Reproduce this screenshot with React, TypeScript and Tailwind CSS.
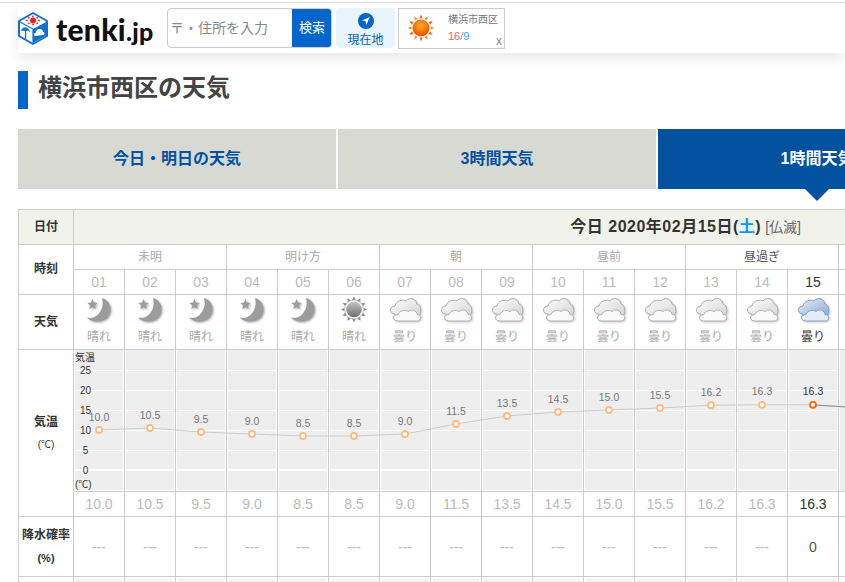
import { Fragment } from 'react'

type Kind = 'moon' | 'sun' | 'cloud'

interface Hour {
  hour: string
  kind: Kind
  label: string
  temp: string
  precip: string
  now?: boolean
}

const hours: Hour[] = [
  { hour: '01', kind: 'moon', label: '晴れ', temp: '10.0', precip: '---' },
  { hour: '02', kind: 'moon', label: '晴れ', temp: '10.5', precip: '---' },
  { hour: '03', kind: 'moon', label: '晴れ', temp: '9.5', precip: '---' },
  { hour: '04', kind: 'moon', label: '晴れ', temp: '9.0', precip: '---' },
  { hour: '05', kind: 'moon', label: '晴れ', temp: '8.5', precip: '---' },
  { hour: '06', kind: 'sun', label: '晴れ', temp: '8.5', precip: '---' },
  { hour: '07', kind: 'cloud', label: '曇り', temp: '9.0', precip: '---' },
  { hour: '08', kind: 'cloud', label: '曇り', temp: '11.5', precip: '---' },
  { hour: '09', kind: 'cloud', label: '曇り', temp: '13.5', precip: '---' },
  { hour: '10', kind: 'cloud', label: '曇り', temp: '14.5', precip: '---' },
  { hour: '11', kind: 'cloud', label: '曇り', temp: '15.0', precip: '---' },
  { hour: '12', kind: 'cloud', label: '曇り', temp: '15.5', precip: '---' },
  { hour: '13', kind: 'cloud', label: '曇り', temp: '16.2', precip: '---' },
  { hour: '14', kind: 'cloud', label: '曇り', temp: '16.3', precip: '---' },
  { hour: '15', kind: 'cloud', label: '曇り', temp: '16.3', precip: '0', now: true },
]

const periods = [
  { name: '未明', span: 3 },
  { name: '明け方', span: 3 },
  { name: '朝', span: 3 },
  { name: '昼前', span: 3 },
  { name: '昼過ぎ', span: 3, now: true },
]

const axis = [25, 20, 15, 10, 5, 0]

const ptX = (i: number) => 25 + 51 * i
const ptY = (t: string) => 120 - 4 * parseFloat(t)

function Logo() {
  return (
    <svg viewBox="0 0 30 33" className="h-[33px] w-[30px]">
      <path d="M15 1 L29 9 L29 24 L15 32 L1 24 L1 9 Z" fill="#fff" stroke="#1270c8" strokeWidth="2" strokeLinejoin="round" />
      <path d="M15 17 L28 10 L28 23.5 L15 31 Z" fill="#1270c8" />
      <path d="M2 10 L15 17 L15 31" fill="none" stroke="#1270c8" strokeWidth="1.2" />
      <circle cx="15" cy="8.5" r="3" fill="#e8242a" />
      {[0, 45, 90, 135, 180, 225, 270, 315].map((a) => (
        <circle
          key={a}
          cx={15 + 6 * Math.cos((a * Math.PI) / 180)}
          cy={8.5 + 4 * Math.sin((a * Math.PI) / 180)}
          r="0.9"
          fill="#e8242a"
        />
      ))}
      <path d="M3 19 C4 14 11 14 12 20 C10 18.5 9 18.5 7.6 19.5 C6 18.5 5 18.5 3 19 Z" fill="#0f7fb8" />
      <path d="M7.6 18 L7.6 26 C7.6 27.5 5.5 27.5 5.5 26" fill="none" stroke="#0f7fb8" strokeWidth="1.3" />
      <path d="M17.5 24 C15.5 24 15.5 21 17.5 21 C18 18 20.5 16 23 17.5 C25 18 25 20 25 20 C27 20 27 23 25 23 Z" fill="#fff" />
    </svg>
  )
}

function ColorSun() {
  const rays = Array.from({ length: 12 }, (_, i) => i * 30)
  return (
    <svg viewBox="0 0 30 30" className="h-[30px] w-[30px]">
      <defs>
        <radialGradient id="sunfill" cx="50%" cy="35%" r="65%">
          <stop offset="0%" stopColor="#ffb020" />
          <stop offset="100%" stopColor="#f04a00" />
        </radialGradient>
      </defs>
      {rays.map((a) => (
        <path key={a} d="M13.4 5.5 L15 1.5 L16.6 5.5 Z" fill={a % 60 === 0 ? '#ff5a1e' : '#ff8a1e'} transform={`rotate(${a} 15 15)`} />
      ))}
      <circle cx="15" cy="15" r="8.5" fill="url(#sunfill)" />
    </svg>
  )
}

function MoonIcon() {
  return (
    <svg viewBox="0 0 40 32" className="h-8 w-10 drop-shadow-[1px_1px_1px_rgba(0,0,0,0.35)]">
      <path d="M23 1 C30 3 33 10 31 16 C29 23 21 26 14 24 C11 23 9 22 8 20.5 C11 21.5 15 21 18 18.5 C23 14.5 25 7 23 1 Z" fill="#9c9c9c" />
      <path d="M13.5 2 L14.9 5.6 L18.6 5.9 L15.8 8.3 L16.7 12 L13.5 10 L10.3 12 L11.2 8.3 L8.4 5.9 L12.1 5.6 Z" fill="#9c9c9c" />
    </svg>
  )
}

function GraySunIcon() {
  const rays = Array.from({ length: 12 }, (_, i) => i * 30)
  return (
    <svg viewBox="0 0 40 32" className="h-8 w-10">
      <defs>
        <linearGradient id="graysun" x1="0" y1="0" x2="0" y2="1">
          <stop offset="0%" stopColor="#c4c4c4" />
          <stop offset="100%" stopColor="#6e6e6e" />
        </linearGradient>
      </defs>
      {rays.map((a) => (
        <path key={a} d="M18.2 3 L20 -0.5 L21.8 3 Z" fill="#8a8a8a" transform={`rotate(${a} 20 12.5)`} />
      ))}
      <circle cx="20" cy="12.5" r="9.4" fill="#fff" stroke="#a0a0a0" strokeWidth="0.6" />
      <circle cx="20" cy="12.5" r="7.8" fill="url(#graysun)" />
    </svg>
  )
}

function CloudIcon({ id, now }: { id: string; now?: boolean }) {
  const top = now ? '#e6eef8' : '#ffffff'
  const bottom = now ? '#8ba6cd' : '#d2d2d2'
  return (
    <svg viewBox="0 0 40 32" className="h-8 w-10 drop-shadow-[1px_1px_1px_rgba(0,0,0,0.2)]">
      <defs>
        <linearGradient id={id} x1="0" y1="0" x2="1" y2="1">
          <stop offset="0%" stopColor={top} />
          <stop offset="100%" stopColor={bottom} />
        </linearGradient>
      </defs>
      <path
        d="M10 17 C4 17 4 9 10 9 C11 4 17 2 21 4 C24 0 31 1 32 7 C37 8 37 18 33 20 L10 20 Z"
        fill={`url(#${id})`}
        stroke={now ? '#7f98bd' : '#a8a8a8'}
        strokeWidth="0.9"
      />
      <path
        d="M13 24 C7 24 7 17.5 13 17.5 C14 13.5 20 12.5 23 14.5 C26 11.5 32 13.5 32 17.5 C37 17.5 37 24 32 24 Z"
        fill={now ? '#e3ecf7' : '#fbfbfb'}
        stroke={now ? '#7f98bd' : '#a8a8a8'}
        strokeWidth="0.9"
      />
    </svg>
  )
}

function WeatherIcon({ h }: { h: Hour }) {
  if (h.kind === 'moon') return <MoonIcon />
  if (h.kind === 'sun') return <GraySunIcon />
  return <CloudIcon id={`cloud-${h.hour}`} now={h.now} />
}

function ChartCell({ children }: { children?: React.ReactNode }) {
  return (
    <td className="border border-[#ccc] p-0 align-top">
      <div className="relative flex h-[141px] flex-col gap-px px-px">
        <div className="h-5 bg-[#eee]" />
        <div className="h-[19px] bg-[#eee]" />
        <div className="h-[19px] bg-[#eee]" />
        <div className="h-[19px] bg-[#eee]" />
        <div className="h-[19px] bg-[#eee]" />
        <div className="h-[18px] bg-[#eee]" />
        <div className="mt-px h-[19px] bg-[#eee]" />
        {children}
      </div>
    </td>
  )
}

function TempChart() {
  const line = hours.map((h, i) => `${ptX(i)},${ptY(h.temp)}`).join(' ')
  const last = hours.length - 1
  return (
    <svg className="absolute top-0 left-0 z-10 h-[141px] w-[772px] overflow-visible" viewBox="0 0 772 141">
      <polyline points={line} fill="none" stroke="#ccc" strokeWidth="1" />
      <line x1={ptX(last)} y1={ptY('16.3')} x2="772" y2="57" stroke="#999" strokeWidth="1.2" />
      <text x="1" y="11" fontSize="10" fill="#333">気温</text>
      {axis.map((v) => (
        <text key={v} x="11.5" y={120 - 4 * v + 4} fontSize="10" fill="#333" textAnchor="middle">
          {v}
        </text>
      ))}
      <text x="1" y="138" fontSize="10" fill="#333">(℃)</text>
      {hours.map((h, i) => (
        <Fragment key={h.hour}>
          <circle cx={ptX(i)} cy={ptY(h.temp)} r="3" fill="#fff" stroke={h.now ? '#ff6600' : '#ffbb80'} strokeWidth="1.8" />
          <text x={ptX(i)} y={ptY(h.temp) - 9.5} fontSize="10.5" fill={h.now ? '#333' : '#777'} textAnchor="middle">
            {h.temp}
          </text>
        </Fragment>
      ))}
    </svg>
  )
}

const headCell = 'border border-[#ccc] p-0 text-center text-xs font-bold text-[#333]'
const bodyCell = 'border border-[#ccc] p-0 text-center'

function HourTable() {
  return (
    <table className="ml-[18px] w-[1279px] table-fixed border-collapse bg-white">
      <colgroup>
        <col className="w-[55px]" />
        {Array.from({ length: 24 }, (_, i) => (
          <col key={i} className="w-[51px]" />
        ))}
      </colgroup>
      <tbody>
        <tr className="h-[35px] bg-[#f2f2ec]">
          <th className={headCell}>日付</th>
          <td colSpan={24} className="border border-[#ccc] p-0 text-center text-[#333]">
            <span className="text-base font-bold tracking-[0.5px]">
              今日 2020年02月15日(<span className="text-[#0099ff]">土</span>)
            </span>
            <span className="ml-1 text-sm text-[#666]">[仏滅]</span>
          </td>
        </tr>
        <tr className="h-[25px]">
          <th rowSpan={2} className={`${headCell} pb-0.5`}>時刻</th>
          {periods.map((p) => (
            <td key={p.name} colSpan={p.span} className={`${bodyCell} text-xs ${p.now ? 'text-[#555]' : 'text-[#aaa]'}`}>
              {p.name}
            </td>
          ))}
          <td colSpan={9} className={bodyCell} />
        </tr>
        <tr className="h-[25px]">
          {hours.map((h) => (
            <td key={h.hour} className={`${bodyCell} text-sm ${h.now ? 'text-[#333]' : 'text-[#bbb]'}`}>
              {h.hour}
            </td>
          ))}
          <td colSpan={9} className={bodyCell} />
        </tr>
        <tr className="h-[55px]">
          <th className={headCell}>天気</th>
          {hours.map((h) => (
            <td key={h.hour} className={`${bodyCell} align-top text-xs ${h.now ? 'text-[#333]' : 'text-[#aaa]'}`}>
              <div className="flex flex-col items-center pt-0.5">
                <WeatherIcon h={h} />
                <span className="leading-4">{h.label}</span>
              </div>
            </td>
          ))}
          <td colSpan={9} className={bodyCell} />
        </tr>
        <tr className="h-[142px]">
          <th rowSpan={2} className={headCell}>
            <div>気温</div>
            <div className="mt-2 text-[10px] font-normal">(℃)</div>
          </th>
          {hours.map((h, i) => (
            <ChartCell key={h.hour}>{i === 0 && <TempChart />}</ChartCell>
          ))}
          <td colSpan={9} className="border border-[#ccc] p-0 align-top">
            <div className="mx-px h-[141px] bg-[#eee]" />
          </td>
        </tr>
        <tr className="h-[25px]">
          {hours.map((h) => (
            <td key={h.hour} className={`${bodyCell} text-sm ${h.now ? 'text-[#333]' : 'text-[#bbb]'}`}>
              {h.temp}
            </td>
          ))}
          <td colSpan={9} className={bodyCell} />
        </tr>
        <tr className="h-[60px]">
          <th className={headCell}>
            <div>降水確率</div>
            <div className="mt-2 text-[11px]">(%)</div>
          </th>
          {hours.map((h) => (
            <td key={h.hour} className={`${bodyCell} text-sm ${h.now ? 'text-[#555]' : 'text-[#bbb]'}`}>
              {h.precip}
            </td>
          ))}
          <td colSpan={9} className={bodyCell} />
        </tr>
        <tr className="h-[40px]">
          <th className={headCell} />
          {hours.map((h) => (
            <td key={h.hour} className="border border-[#ccc] px-0.5 pt-0.5 pb-0 align-top">
              <div className="h-9 bg-[#f2f2f2]" />
            </td>
          ))}
          <td colSpan={9} className={bodyCell} />
        </tr>
      </tbody>
    </table>
  )
}

export default function App() {
  return (
    <div className="h-screen w-full overflow-hidden bg-white font-['Liberation_Sans','Noto_Sans_CJK_JP',sans-serif]">
      <div className="mt-[2px] h-px bg-[#ddd]" />

      {/* Header */}
      <header className="ml-[18px] flex h-[50px] items-start bg-white shadow-[0_6px_10px_rgba(0,0,0,0.08)]">
        <div className="mt-[9px] flex items-center">
          <Logo />
          <span className="ml-2 font-['Lato',sans-serif] text-[30px] leading-none font-black tracking-[0.01em] text-[#111]">
            tenki<span className="text-[25px]">.jp</span>
          </span>
        </div>
        <div className="absolute top-2 left-[167px] flex h-10 w-[165px] overflow-hidden rounded-[4px] border border-[#ccc]">
          <div className="flex flex-1 items-center pl-0.5 text-sm text-[#888]">〒・住所を入力</div>
          <div className="-my-px -mr-px flex w-10 items-center justify-center bg-[#0066cc] text-[13px] text-white">検索</div>
        </div>
        <div className="absolute top-2 left-[336px] flex h-10 w-[59px] flex-col items-center rounded-[3px] bg-[#e8f4fe] pt-[4px]">
          <svg viewBox="0 0 16 16" className="mt-px h-4 w-4">
            <circle cx="8" cy="8" r="8" fill="#0066cc" />
            <path d="M11.8 4 L4 7.6 L7.6 8.3 L8.4 12 Z" fill="#fff" />
          </svg>
          <span className="mt-[3px] text-xs leading-4 text-[#0a5ea8]">現在地</span>
        </div>
        <div className="absolute top-2 left-[398px] flex h-[41px] w-[107px] border border-[#ccc] bg-white">
          <div className="mt-1 ml-[7px]">
            <ColorSun />
          </div>
          <div className="ml-3 flex flex-col pt-[3px]">
            <span className="text-[10px] leading-4 text-[#777]">横浜市西区</span>
            <span className="text-[11px] leading-4 text-[#999]">
              <span className="text-[#ff5a66]">16</span>/<span className="text-[#33aaee]">9</span>
            </span>
          </div>
          <span className="absolute right-[2px] bottom-px text-xs leading-3 text-[#888]">x</span>
        </div>
      </header>

      {/* Title */}
      <div className="mt-[18px] ml-[18px] flex h-[38px] items-center">
        <div className="h-[38px] w-[10px] bg-[#0066cc]" />
        <h1 className="-mt-1 ml-[10px] text-2xl font-bold text-[#444]">横浜市西区の天気</h1>
      </div>

      {/* Tabs */}
      <div className="mt-5 ml-[18px] flex w-[958px] gap-[2px]">
        <div className="flex h-[60px] w-[318px] items-center justify-center bg-[#d9d9d4] text-base font-bold text-[#00529f]">
          今日・明日の天気
        </div>
        <div className="flex h-[60px] w-[318px] items-center justify-center bg-[#d9d9d4] text-base font-bold text-[#00529f]">
          3時間天気
        </div>
        <div className="relative flex h-[60px] w-[318px] items-center justify-center bg-[#00529f] text-base font-bold text-white">
          1時間天気
          <div className="absolute top-full left-1/2 h-0 w-0 -translate-x-1/2 border-x-[12px] border-t-[12px] border-x-transparent border-t-[#00529f]" />
        </div>
      </div>

      <div className="mt-5">
        <HourTable />
      </div>
    </div>
  )
}
